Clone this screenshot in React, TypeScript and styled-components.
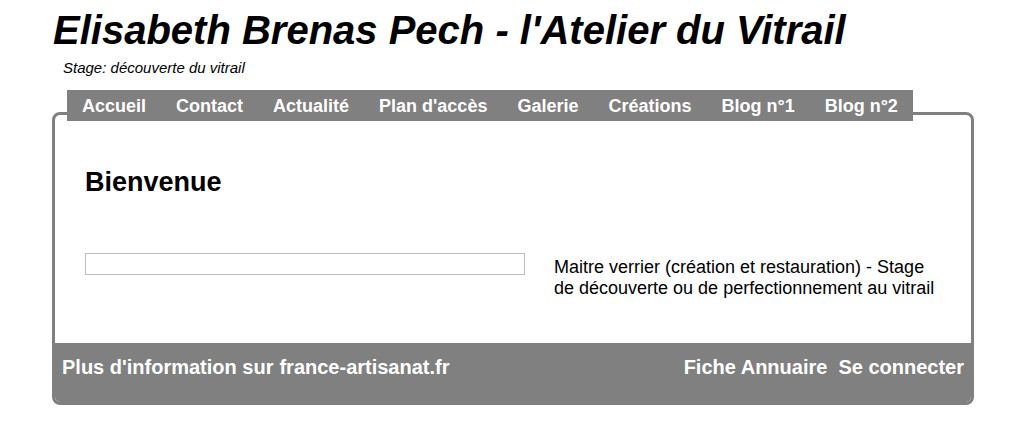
import React from "react";
import styled, { createGlobalStyle } from "styled-components";

const GlobalStyle = createGlobalStyle`
  body {
    margin: 0;
    background: #ffffff;
    font-family: "Liberation Sans", Arial, sans-serif;
    color: #000000;
  }
`;

const Page = styled.div`
  padding: 0 50px 0 52px;
`;

const Title = styled.h1`
  margin: 7px 0 0 1px;
  font-size: 40px;
  line-height: 46px;
  font-weight: bold;
  font-style: italic;
`;

const Subtitle = styled.p`
  margin: 6px 0 0 11px;
  font-size: 15px;
  line-height: 18px;
  font-style: italic;
`;

const Nav = styled.nav`
  position: relative;
  z-index: 1;
  display: inline-flex;
  margin: 13px 0 0 15px;
  background: #808080;
`;

const NavLink = styled.a`
  padding: 6px 15px 4px 15px;
  font-size: 18px;
  line-height: 21px;
  font-weight: bold;
  color: #ffffff;
  text-decoration: none;
  white-space: nowrap;
`;

const Box = styled.div`
  margin-top: -9px;
  border: 3px solid #808080;
  border-radius: 8px;
  overflow: hidden;
`;

const Content = styled.div`
  padding: 52px 30px 44px 30px;
`;

const Heading = styled.h2`
  margin: 0;
  font-size: 27px;
  line-height: 31px;
  font-weight: bold;
`;

const Row = styled.div`
  display: grid;
  grid-template-columns: 440px 1fr;
  column-gap: 29px;
  margin-top: 55px;
`;

const Field = styled.div`
  height: 20px;
  border: 1px solid #c0c0c0;
`;

const Description = styled.p`
  margin: 4px 0 0 0;
  font-size: 18px;
  line-height: 21px;
`;

const Footer = styled.footer`
  display: flex;
  justify-content: space-between;
  height: 59px;
  box-sizing: border-box;
  padding: 12px 7px 0 7px;
  background: #808080;
`;

const FooterGroup = styled.div<{ $gap: number }>`
  display: flex;
  gap: ${(p) => p.$gap}px;
`;

const FooterLink = styled.a`
  font-size: 20px;
  line-height: 24px;
  font-weight: bold;
  color: #ffffff;
  text-decoration: none;
  white-space: nowrap;
`;

const navItems = [
  "Accueil",
  "Contact",
  "Actualité",
  "Plan d'accès",
  "Galerie",
  "Créations",
  "Blog n°1",
  "Blog n°2",
];

export default function App() {
  return (
    <Page>
      <GlobalStyle />
      <Title>Elisabeth Brenas Pech - l'Atelier du Vitrail</Title>
      <Subtitle>Stage: découverte du vitrail</Subtitle>
      <Nav>
        {navItems.map((item) => (
          <NavLink key={item} href="#">
            {item}
          </NavLink>
        ))}
      </Nav>
      <Box>
        <Content>
          <Heading>Bienvenue</Heading>
          <Row>
            <Field />
            <Description>
              Maitre verrier (création et restauration) - Stage de découverte
              ou de perfectionnement au vitrail
            </Description>
          </Row>
        </Content>
        <Footer>
          <FooterGroup $gap={6}>
            <FooterLink href="#">Plus d'information sur</FooterLink>
            <FooterLink href="#">france-artisanat.fr</FooterLink>
          </FooterGroup>
          <FooterGroup $gap={11}>
            <FooterLink href="#">Fiche Annuaire</FooterLink>
            <FooterLink href="#">Se connecter</FooterLink>
          </FooterGroup>
        </Footer>
      </Box>
    </Page>
  );
}
